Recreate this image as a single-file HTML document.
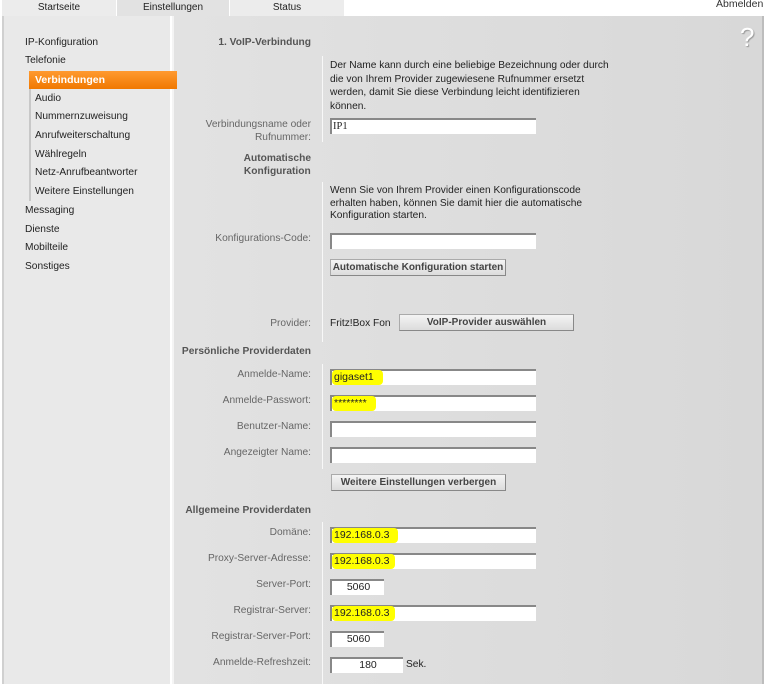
<!DOCTYPE html><html><head><meta charset="utf-8"><style>
*{margin:0;padding:0;box-sizing:border-box}
body{width:768px;height:684px;background:#fff;font-family:"Liberation Sans",Arial,sans-serif;font-size:10.2px;color:#222;position:relative;overflow:hidden}
.a{position:absolute;white-space:nowrap}
.tab{position:absolute;top:0;height:16px;background:#ececec;border-right:1px solid #fff;text-align:center;line-height:16px;font-size:10px;color:#222}
.nav{position:absolute;left:2px;top:16px;width:168px;height:668px;background:#e9e9e9;border-left:2px solid #d0d0d0}
.cont{position:absolute;left:172px;top:16px;width:592px;height:668px;background:linear-gradient(90deg,#e2e2e2,#d8d8d8);border-right:2px solid #bdbdbd;border-left:2px solid #f4f4f4}
.l{position:absolute;right:457px;white-space:nowrap;color:#666;text-align:right}
.b{color:#555;font-weight:bold}
.in{position:absolute;left:330px;width:206px;height:16px;background:#fff;border-top:2px solid #888;border-left:2px solid #888;font-size:10.5px;padding-left:1px;line-height:13px;white-space:nowrap}
.btn{position:absolute;height:17px;background:linear-gradient(#f4f4f4,#dcdcdc);border:1px solid #aaa;border-right-color:#888;border-bottom-color:#888;text-align:center;font-weight:bold;color:#444;line-height:15px;font-size:10px;white-space:nowrap;overflow:hidden}
.div{position:absolute;left:322px;width:1px;background:#f8f8f8}
.hl{background:#ffff00;border-radius:4px;padding:1px 3px 2px 2px;margin-left:-1px}
.n{position:absolute;left:25px;white-space:nowrap}
.s{position:absolute;left:35px;white-space:nowrap}
</style></head><body>
<div class="tab" style="left:2px;width:115px">Startseite</div>
<div class="tab" style="left:117px;width:113px;background:#e2e2e2">Einstellungen</div>
<div class="tab" style="left:230px;width:115px">Status</div>
<div class="a" style="left:716px;top:-2px;font-size:10.5px;color:#333">Abmelden</div>
<div class="nav"></div>
<div class="cont"></div>
<div class="a" style="left:740px;top:22px;font-size:26px;color:#fff;text-shadow:1px 1px 1px #999">?</div>
<div class="n" style="top:37px">IP-Konfiguration</div>
<div class="n" style="top:55px">Telefonie</div>
<div class="a" style="left:29px;top:71px;width:2px;height:130px;background:#c8c8c8"></div>
<div class="a" style="left:29px;top:71px;width:148px;height:18px;background:linear-gradient(#ff9a30,#f07800)"></div>
<div class="s" style="top:74px;color:#fff;font-weight:bold;font-size:10.5px">Verbindungen</div>
<div class="s" style="top:93px">Audio</div>
<div class="s" style="top:111px">Nummernzuweisung</div>
<div class="s" style="top:130px">Anrufweiterschaltung</div>
<div class="s" style="top:149px">Wählregeln</div>
<div class="s" style="top:167px">Netz-Anrufbeantworter</div>
<div class="s" style="top:186px">Weitere Einstellungen</div>
<div class="n" style="top:205px">Messaging</div>
<div class="n" style="top:224px">Dienste</div>
<div class="n" style="top:242px">Mobilteile</div>
<div class="n" style="top:261px">Sonstiges</div>

<div class="div" style="top:56px;height:86px"></div>
<div class="div" style="top:182px;height:160px"></div>
<div class="div" style="top:364px;height:105px"></div>
<div class="div" style="top:522px;height:162px"></div>

<div class="l b" style="top:37px">1. VoIP-Verbindung</div>
<div class="a" style="left:330px;top:59px;line-height:13.5px">Der Name kann durch eine beliebige Bezeichnung oder durch<br>die von Ihrem Provider zugewiesene Rufnummer ersetzt<br>werden, damit Sie diese Verbindung leicht identifizieren<br>können.</div>
<div class="l" style="top:118px;line-height:13px">Verbindungsname oder<br>Rufnummer:</div>
<div class="in" style="top:118px;font-family:'Liberation Serif',serif">IP1</div>
<div class="l b" style="top:152px;line-height:13px;text-align:center">Automatische<br>Konfiguration</div>
<div class="a" style="left:330px;top:185px;line-height:12.5px">Wenn Sie von Ihrem Provider einen Konfigurationscode<br>erhalten haben, können Sie damit hier die automatische<br>Konfiguration starten.</div>
<div class="l" style="top:233px">Konfigurations-Code:</div>
<div class="in" style="top:233px"></div>
<div class="btn" style="left:330px;top:259px;width:176px">Automatische Konfiguration starten</div>
<div class="l" style="top:318px">Provider:</div>
<div class="a" style="left:330px;top:318px">Fritz!Box Fon</div>
<div class="btn" style="left:399px;top:314px;width:175px">VoIP-Provider auswählen</div>
<div class="l b" style="top:346px">Persönliche Providerdaten</div>
<div class="l" style="top:369px">Anmelde-Name:</div>
<div class="in" style="top:369px"><span class="hl">gigaset1&nbsp;&nbsp;</span></div>
<div class="l" style="top:395px">Anmelde-Passwort:</div>
<div class="in" style="top:395px"><span class="hl">********&nbsp;&nbsp;</span></div>
<div class="l" style="top:421px">Benutzer-Name:</div>
<div class="in" style="top:421px"></div>
<div class="l" style="top:447px">Angezeigter Name:</div>
<div class="in" style="top:447px"></div>
<div class="btn" style="left:331px;top:474px;width:175px">Weitere Einstellungen verbergen</div>
<div class="l b" style="top:505px">Allgemeine Providerdaten</div>
<div class="l" style="top:527px">Domäne:</div>
<div class="in" style="top:527px"><span class="hl">192.168.0.3&nbsp;&nbsp;</span></div>
<div class="l" style="top:553px">Proxy-Server-Adresse:</div>
<div class="in" style="top:553px"><span class="hl">192.168.0.3&nbsp;</span></div>
<div class="l" style="top:579px">Server-Port:</div>
<div class="in" style="top:579px;width:54px;text-align:center">5060</div>
<div class="l" style="top:605px">Registrar-Server:</div>
<div class="in" style="top:605px"><span class="hl">192.168.0.3&nbsp;</span></div>
<div class="l" style="top:631px">Registrar-Server-Port:</div>
<div class="in" style="top:631px;width:54px;text-align:center">5060</div>
<div class="l" style="top:657px">Anmelde-Refreshzeit:</div>
<div class="in" style="top:657px;width:73px;text-align:center">180</div>
<div class="a" style="left:406px;top:659px">Sek.</div>
</body></html>
